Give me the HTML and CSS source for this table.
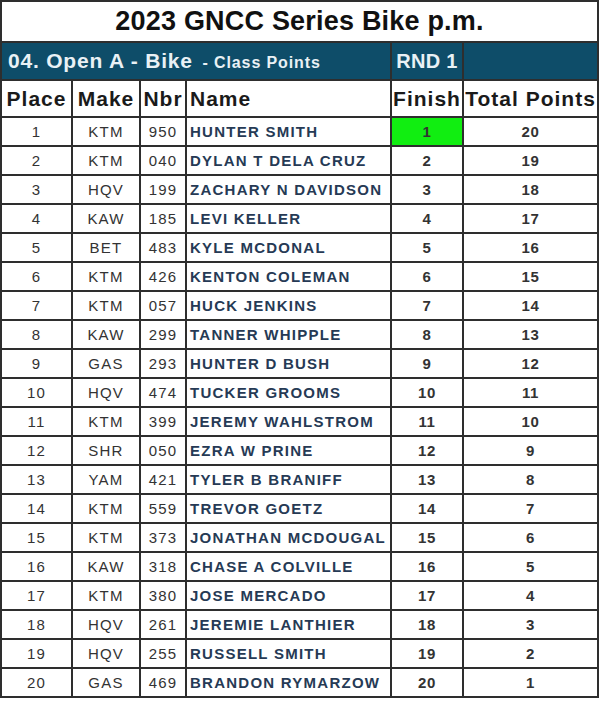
FILE: index.html
```html
<!DOCTYPE html>
<html>
<head>
<meta charset="utf-8">
<link rel="stylesheet" href="styles.css">
</head>
<body>
<table class="results">
  <colgroup>
    <col class="c-place"><col class="c-make"><col class="c-nbr"><col class="c-name"><col class="c-finish"><col class="c-total">
  </colgroup>
  <tr class="title-row"><td colspan="6" class="title">2023 GNCC Series Bike p.m.</td></tr>
  <tr class="class-row">
    <td colspan="4" class="class-name">04. Open A - Bike <span class="sub">- Class Points</span></td>
    <td class="rnd">RND 1</td>
    <td></td>
  </tr>
  <tr class="head-row">
    <th>Place</th><th>Make</th><th>Nbr</th><th class="name">Name</th><th>Finish</th><th>Total Points</th>
  </tr>
  <tr><td>1</td><td>KTM</td><td>950</td><td class="name">HUNTER SMITH</td><td class="fin win">1</td><td class="tot">20</td></tr>
  <tr><td>2</td><td>KTM</td><td>040</td><td class="name">DYLAN T DELA CRUZ</td><td class="fin">2</td><td class="tot">19</td></tr>
  <tr><td>3</td><td>HQV</td><td>199</td><td class="name">ZACHARY N DAVIDSON</td><td class="fin">3</td><td class="tot">18</td></tr>
  <tr><td>4</td><td>KAW</td><td>185</td><td class="name">LEVI KELLER</td><td class="fin">4</td><td class="tot">17</td></tr>
  <tr><td>5</td><td>BET</td><td>483</td><td class="name">KYLE MCDONAL</td><td class="fin">5</td><td class="tot">16</td></tr>
  <tr><td>6</td><td>KTM</td><td>426</td><td class="name">KENTON COLEMAN</td><td class="fin">6</td><td class="tot">15</td></tr>
  <tr><td>7</td><td>KTM</td><td>057</td><td class="name">HUCK JENKINS</td><td class="fin">7</td><td class="tot">14</td></tr>
  <tr><td>8</td><td>KAW</td><td>299</td><td class="name">TANNER WHIPPLE</td><td class="fin">8</td><td class="tot">13</td></tr>
  <tr><td>9</td><td>GAS</td><td>293</td><td class="name">HUNTER D BUSH</td><td class="fin">9</td><td class="tot">12</td></tr>
  <tr><td>10</td><td>HQV</td><td>474</td><td class="name">TUCKER GROOMS</td><td class="fin">10</td><td class="tot">11</td></tr>
  <tr><td>11</td><td>KTM</td><td>399</td><td class="name">JEREMY WAHLSTROM</td><td class="fin">11</td><td class="tot">10</td></tr>
  <tr><td>12</td><td>SHR</td><td>050</td><td class="name">EZRA W PRINE</td><td class="fin">12</td><td class="tot">9</td></tr>
  <tr><td>13</td><td>YAM</td><td>421</td><td class="name">TYLER B BRANIFF</td><td class="fin">13</td><td class="tot">8</td></tr>
  <tr><td>14</td><td>KTM</td><td>559</td><td class="name">TREVOR GOETZ</td><td class="fin">14</td><td class="tot">7</td></tr>
  <tr><td>15</td><td>KTM</td><td>373</td><td class="name">JONATHAN MCDOUGAL</td><td class="fin">15</td><td class="tot">6</td></tr>
  <tr><td>16</td><td>KAW</td><td>318</td><td class="name">CHASE A COLVILLE</td><td class="fin">16</td><td class="tot">5</td></tr>
  <tr><td>17</td><td>KTM</td><td>380</td><td class="name">JOSE MERCADO</td><td class="fin">17</td><td class="tot">4</td></tr>
  <tr><td>18</td><td>HQV</td><td>261</td><td class="name">JEREMIE LANTHIER</td><td class="fin">18</td><td class="tot">3</td></tr>
  <tr><td>19</td><td>HQV</td><td>255</td><td class="name">RUSSELL SMITH</td><td class="fin">19</td><td class="tot">2</td></tr>
  <tr><td>20</td><td>GAS</td><td>469</td><td class="name">BRANDON RYMARZOW</td><td class="fin">20</td><td class="tot">1</td></tr>
</table>
</body>
</html>
```
FILE: styles.css
```css
html, body {
  margin: 0;
  padding: 0;
  background: #ffffff;
}

.results {
  table-layout: fixed;
  width: 599px;
  border-collapse: separate;
  border-spacing: 2px;
  background: #2e2e2e;
  font-family: "Liberation Sans", Arial, sans-serif;
}

.c-place { width: 69px; }
.c-make { width: 66px; }
.c-nbr { width: 44px; }
.c-name { width: 203px; }
.c-finish { width: 70px; }
.c-total { width: 133px; }

.results td,
.results th {
  padding: 0;
  background: #ffffff;
  text-align: center;
  white-space: nowrap;
  overflow: hidden;
  height: 27px;
  font-size: 15px;
  color: #333333;
  letter-spacing: 1.2px;
}

.results .title {
  height: 39px;
  font-size: 27px;
  font-weight: bold;
  color: #111111;
  letter-spacing: 0.2px;
}

.class-row td {
  height: 36px;
  background: #0e4d69;
  color: #e9f1f5;
  font-weight: bold;
  font-size: 21px;
  letter-spacing: 0.8px;
}

.results .class-name {
  text-align: left;
  padding-left: 6px;
}

.class-name .sub {
  font-size: 16px;
  letter-spacing: 0.9px;
  margin-left: 3px;
}

.class-row .rnd {
  font-size: 20px;
  letter-spacing: 0.3px;
}

.head-row th {
  height: 35px;
  font-size: 21px;
  font-weight: bold;
  color: #1a1a1a;
  letter-spacing: 1px;
}

.results .name {
  text-align: left;
  padding-left: 3px;
}

.results td.name {
  font-weight: bold;
  color: #263a55;
  letter-spacing: 1.25px;
}

.results td.fin,
.results td.tot {
  font-weight: bold;
  color: #333333;
  letter-spacing: 0.6px;
}

.results td.win {
  background: #11ee11;
}
```
